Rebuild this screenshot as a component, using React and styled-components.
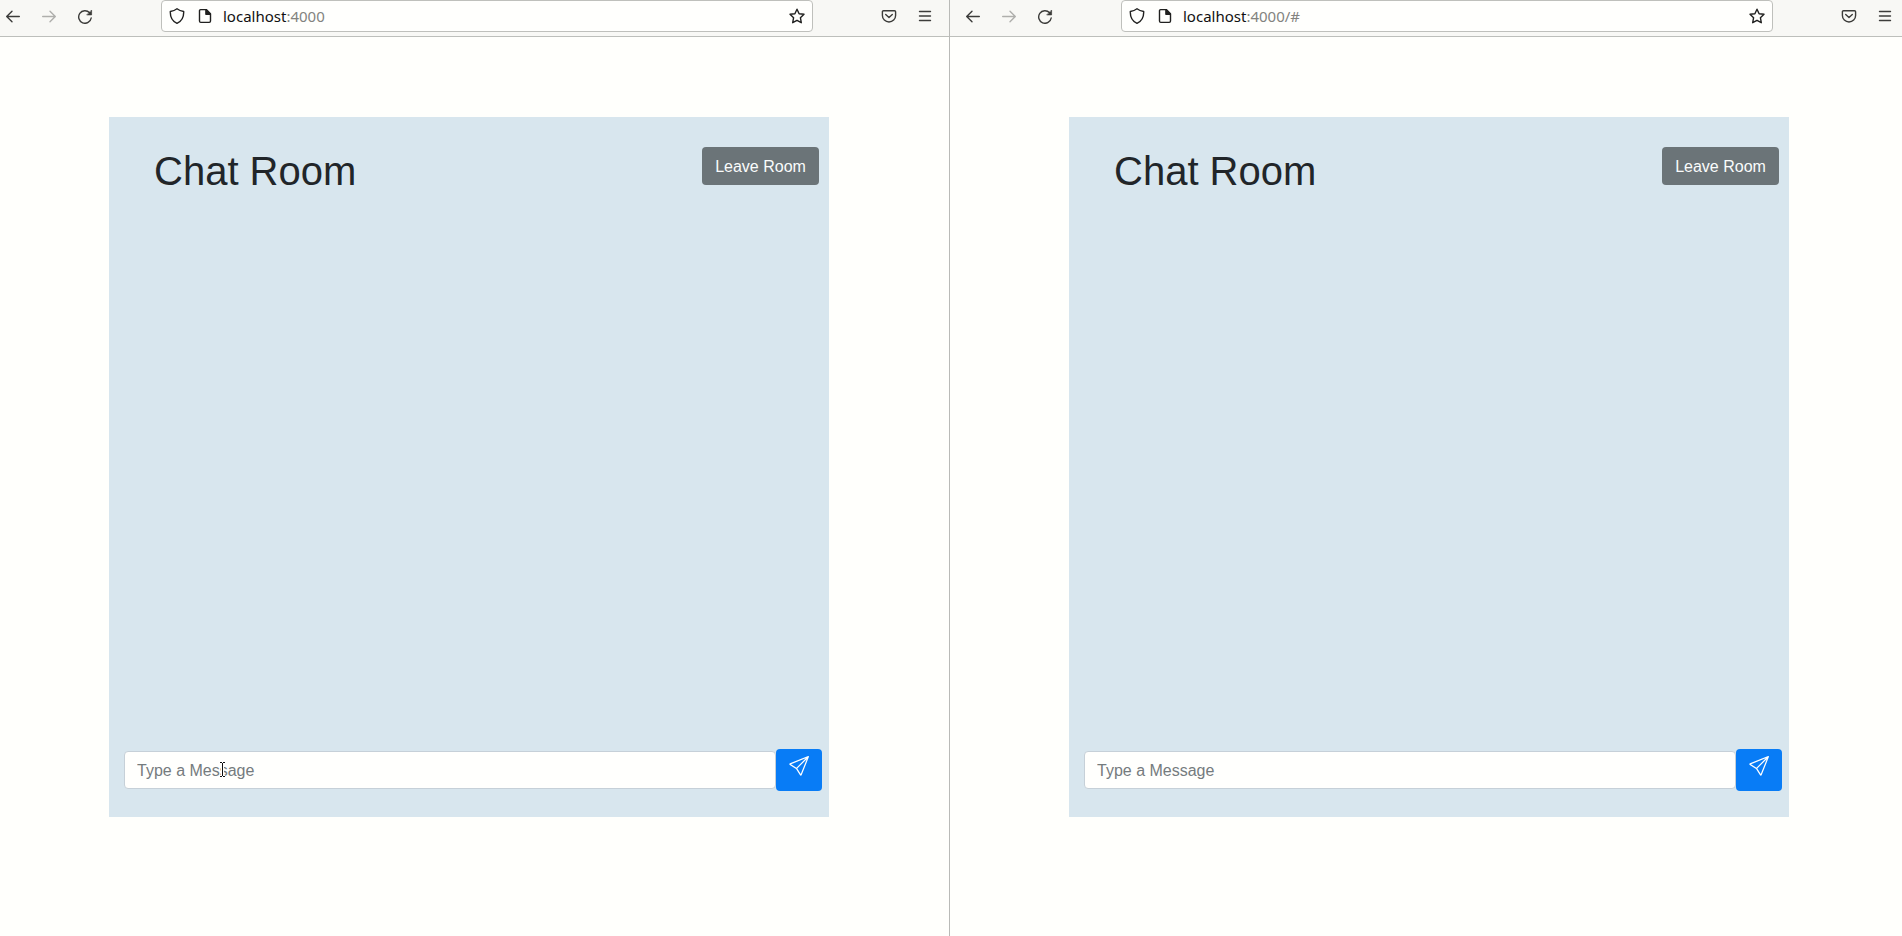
import React from "react";
import styled, { createGlobalStyle } from "styled-components";
import { BsSend } from "react-icons/bs";

const GlobalStyle = createGlobalStyle`
  *, *::before, *::after { box-sizing: border-box; }
  body {
    margin: 0;
    background: #fffffc;
    color: #212529;
    font-family: "Liberation Sans", Arial, sans-serif;
    font-size: 16px;
    line-height: 1.5;
    overflow: hidden;
  }
`;

const Desktop = styled.div`
  display: grid;
  grid-template-columns: 950px 1fr;
  height: 100vh;
`;

const Window = styled.section`
  display: flex;
  flex-direction: column;
  border-right: ${(p) => (p.$divided ? "1px solid #b9bab7" : "none")};
`;

const Toolbar = styled.header`
  display: flex;
  align-items: flex-start;
  height: 37px;
  padding-left: ${(p) => p.$inset + 5}px;
  background: #f8f8f5;
  border-bottom: 1px solid #bdbfbb;
`;

const IconGroup = styled.div`
  display: flex;
  gap: 20px;
  padding-top: 8px;
`;

const Icon = styled.svg`
  display: block;
  flex: none;
  width: 16px;
  height: 16px;
  fill: none;
  stroke: ${(p) => p.$color || "#3c3c3a"};
  stroke-width: 1.4;
  stroke-linecap: round;
  stroke-linejoin: round;
`;

const AddressBar = styled.div`
  display: flex;
  align-items: center;
  width: 652px;
  height: 32px;
  margin: 0 68px;
  padding: 0 7px;
  background: #fffffd;
  border: 1px solid #bfc0bc;
  border-radius: 4px;
`;

const SiteIcons = styled.div`
  display: flex;
  gap: 12px;
  margin-right: 10px;
`;

const Address = styled.span`
  flex: 1;
  font-family: "Noto Sans", "Open Sans", sans-serif;
  font-size: 15px;
  line-height: 20px;
  color: #83837f;
`;

const Host = styled.span`
  color: #111;
`;

const Page = styled.main`
  padding: 80px 0 0 ${(p) => p.$inset + 109}px;
`;

const Room = styled.div`
  display: flex;
  flex-direction: column;
  justify-content: space-between;
  width: 720px;
  height: 700px;
  background: #d8e6ee;
`;

const RoomHeader = styled.div`
  display: flex;
  justify-content: space-between;
  align-items: flex-start;
  padding: 30px 10px 0 45px;
`;

const Title = styled.h1`
  margin: 0;
  font-size: 40px;
  font-weight: 400;
  line-height: 48px;
`;

const LeaveButton = styled.button`
  width: 117px;
  height: 38px;
  padding: 2px 0 0;
  border: 0;
  border-radius: 4px;
  background: #6b7478;
  color: #fafcfc;
  font: inherit;
`;

const Composer = styled.form`
  display: flex;
  align-items: center;
  position: relative;
  padding: 0 7px 26px 15px;
`;

const MessageInput = styled.input`
  flex: 1;
  height: 38px;
  padding: 7px 12px 5px;
  border: 1px solid #c6d0d8;
  border-radius: 4px;
  background: #fffffd;
  font: inherit;
  outline: none;
  &::placeholder { color: #757b7e; opacity: 1; }
`;

const SendButton = styled.button`
  display: flex;
  justify-content: center;
  align-items: flex-start;
  width: 46px;
  height: 42px;
  padding: 7px 0 0;
  border: 0;
  border-radius: 4px;
  background: #087cf6;
  color: #fff;
`;

const TextCursor = styled.svg`
  position: absolute;
  left: 109px;
  top: 12px;
  width: 9px;
  height: 18px;
  fill: none;
`;

const BackIcon = () => (
  <Icon viewBox="0 0 16 16"><path d="M14.3 8.5H1.8M7 3.2 1.7 8.5 7 13.8" /></Icon>
);
const ForwardIcon = () => (
  <Icon viewBox="0 0 16 16" $color="#afafac"><path d="M1.7 8.5h12.5M9 3.2l5.3 5.3L9 13.8" /></Icon>
);
const ReloadIcon = () => (
  <Icon viewBox="0 0 16 16">
    <path d="M12.6 4.7A6.3 6.3 0 1 0 14.2 10" />
    <path d="M14.6 2.4v4.5h-4.5z" fill="#3c3c3a" strokeWidth="0.7" />
  </Icon>
);
const ShieldIcon = () => (
  <Icon viewBox="0 0 16 16" $color="#20201f">
    <path d="M8 .8c2 1.6 4 2.3 6.7 2.7.2 5.4-1.6 9.6-6.7 11.8C2.9 13.1 1.1 8.9 1.3 3.5 4 3.1 6 2.4 8 .8z" />
  </Icon>
);
const PageIcon = () => (
  <Icon viewBox="0 0 16 16" $color="#20201f">
    <path d="M3.600 1.600h5.700l4.200 4.200v7.300a1.300 1.300 0 0 1-1.300 1.300H3.800a1.300 1.300 0 0 1-1.300-1.300V2.700a1.100 1.100 0 0 1 1.100-1.100z" />
    <path d="M8.900 1.700v4.500h4.500z" fill="#20201f" />
  </Icon>
);
const StarIcon = () => (
  <Icon viewBox="0 0 16 16" $color="#20201f">
    <path d="M8 1.200l2.100 4.500 4.900.6-3.600 3.400.9 5L8 12.300l-4.300 2.400.9-5L1 6.300l4.900-.6z" />
  </Icon>
);
const PocketIcon = () => (
  <Icon viewBox="0 0 16 16">
    <path d="M2.500 2.700h11a1.100 1.100 0 0 1 1.100 1.100v3.600a6.600 6.600 0 0 1-13.200 0V3.800a1.100 1.100 0 0 1 1.100-1.100z" />
    <path d="M4.700 6.500 8 9.600l3.300-3.100" />
  </Icon>
);
const MenuIcon = () => (
  <Icon viewBox="0 0 16 16"><path d="M2.500 3.500h11M2.500 8h11M2.500 12.500h11" /></Icon>
);

function BrowserWindow({ path = "", inset = 0, divided, pointer }) {
  return (
    <Window $divided={divided}>
      <Toolbar $inset={inset}>
        <IconGroup>
          <BackIcon />
          <ForwardIcon />
          <ReloadIcon />
        </IconGroup>
        <AddressBar>
          <SiteIcons>
            <ShieldIcon />
            <PageIcon />
          </SiteIcons>
          <Address><Host>localhost</Host>:4000{path}</Address>
          <StarIcon />
        </AddressBar>
        <IconGroup>
          <PocketIcon />
          <MenuIcon />
        </IconGroup>
      </Toolbar>
      <Page $inset={inset}>
        <Room>
          <RoomHeader>
            <Title>Chat Room</Title>
            <LeaveButton type="button">Leave Room</LeaveButton>
          </RoomHeader>
          <Composer onSubmit={(e) => e.preventDefault()}>
            <MessageInput placeholder="Type a Message" />
            <SendButton type="submit" aria-label="Send"><BsSend size={20} /></SendButton>
            {pointer && (
              <TextCursor viewBox="0 0 9 18">
                <path d="M2 1.500h5M4.500 1.500v14M2 15.500h5" stroke="#fff" strokeWidth="3" />
                <path d="M2 1.500h2M5 1.500h2M4.500 2v13M2 15.500h2M5 15.500h2" stroke="#111" />
              </TextCursor>
            )}
          </Composer>
        </Room>
      </Page>
    </Window>
  );
}

export default function App() {
  return (
    <>
      <GlobalStyle />
      <Desktop>
        <BrowserWindow divided pointer />
        <BrowserWindow path="/#" inset={10} />
      </Desktop>
    </>
  );
}
